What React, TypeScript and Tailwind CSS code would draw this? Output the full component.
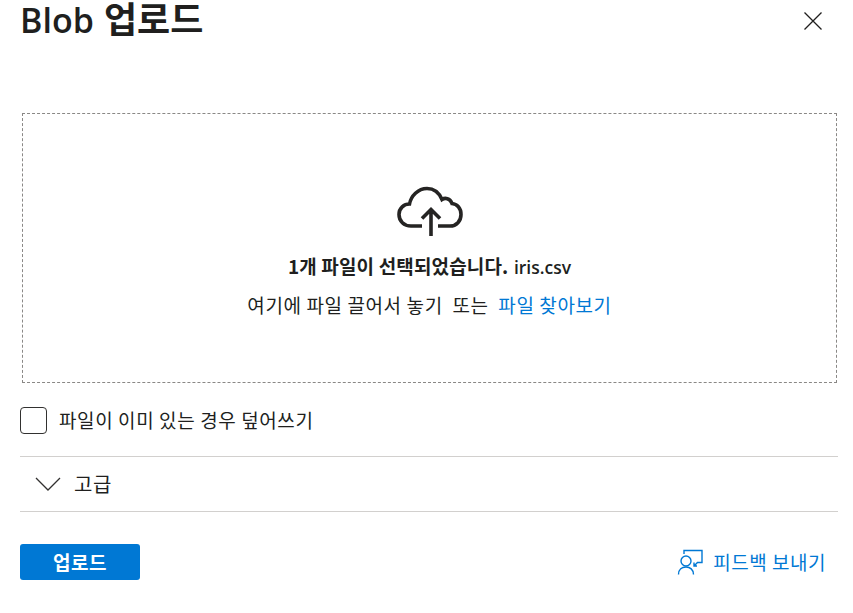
import React from "react";

export default function App() {
  return (
    <div className="w-[853px] h-[613px] bg-white text-[#201f1e] overflow-hidden font-['Noto_Sans_CJK_KR','Noto_Sans',sans-serif] pl-5 pr-[15px]">
      <div className="flex items-start justify-between h-[40px]">
        <h1 className="text-[36px] leading-[34px] font-semibold whitespace-nowrap"><span className="font-['Open_Sans'] text-[34px] mr-[2px]">Blob</span> 업로드</h1>
        <svg width="20" height="20" viewBox="0 0 20 20" className="mr-[15px] mt-[11px]" fill="none" stroke="#201f1e" strokeWidth="1.3"><path d="M1.500 1.500 18.500 18.500M18.500 1.500 1.500 18.500" /></svg>
      </div>
      <div className="ml-[2px] mr-[1px] mt-[73px] h-[270px] border border-dashed border-[#8a8886] flex flex-col items-center">
        <svg width="66" height="50" viewBox="0 0 66 50" className="mt-[72px]" fill="none" stroke="#252423" strokeWidth="3.6"><path d="M25 40H14C7 40 2 35 2 28.500C2 22 7 18 12.500 18C14 10 21 2.500 30 2.500C37 2.500 42 6.500 45 13.500C48 11.500 53 12 55 17.500C60 18 64 22 64 28.500C64 35 59.500 40 53 40H41" /><path d="M34 50V25M25 32.500 34 23.500 43 32.500" /></svg>
        <p className="mt-[17px] text-[19px] tracking-[0.15px] leading-[26px] font-semibold whitespace-nowrap">1개 파일이 선택되었습니다. <span className="font-['Open_Sans'] text-[17.5px] tracking-normal ml-[1px]">iris.csv</span></p>
        <p className="mt-[12px] text-[19px] tracking-[0.6px] leading-[26px] whitespace-nowrap">여기에 파일 끌어서 놓기&nbsp; 또는&nbsp; <span className="text-[#0078d4]">파일 찾아보기</span></p>
      </div>
      <label className="flex items-center gap-[12px] mt-[24px] h-[27px] text-[19px] tracking-[0.6px]">
        <span className="w-[27px] h-[27px] rounded-[4px] border border-[#323130]" />
        <span className="whitespace-nowrap">파일이 이미 있는 경우 덮어쓰기</span>
      </label>
      <div className="mt-[22px] h-[56px] border-y border-[#d2d0ce] flex items-center">
        <svg width="26" height="14" viewBox="0 0 26 14" className="ml-[15px]" fill="none" stroke="#323130" strokeWidth="1.3"><path d="M1 1 13 13 25 1" /></svg>
        <span className="ml-[13px] text-[20px] tracking-[0.6px]">고급</span>
      </div>
      <div className="mt-[32px] flex items-center justify-between">
        <button className="w-[120px] h-[36px] rounded-[3px] bg-[#0078d4] text-white text-[19px] tracking-[0.6px] font-semibold">업로드</button>
        <div className="flex items-center gap-[9px] pr-[12px] text-[#0078d4] text-[19px] tracking-[0.5px]">
          <svg width="27" height="26" viewBox="0 0 27 26" fill="none" stroke="#0078d4" strokeWidth="1.4"><path d="M7 5V1.500H25V13.500H20.500L17 17M17 13.500V17H20" /><circle cx="9" cy="12" r="5" /><path d="M1.500 25.500C1.500 20.500 5 18 9 18C13 18 16.500 20.500 16.500 25.500" /></svg>
          <span className="whitespace-nowrap">피드백 보내기</span>
        </div>
      </div>
    </div>
  );
}
